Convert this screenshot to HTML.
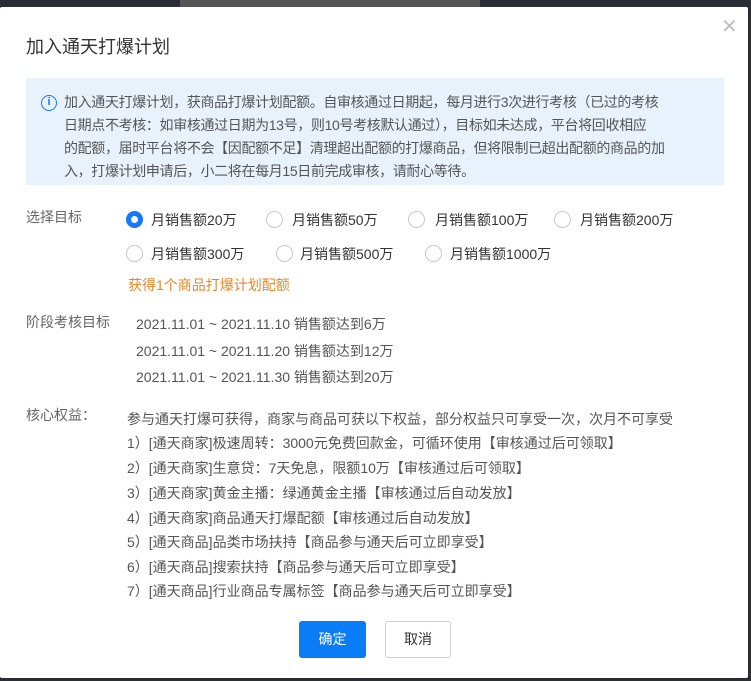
<!DOCTYPE html>
<html><head><meta charset="utf-8"><style>
*{margin:0;padding:0;box-sizing:border-box}
body{width:751px;height:681px;overflow:hidden;background:#2a2d33;font-family:"Liberation Sans","Noto Sans CJK SC",sans-serif;position:relative}
.dlg{position:absolute;left:0;top:7px;width:748px;height:671px;background:#fff;border-radius:2px}
.a{position:absolute;white-space:nowrap}
.t{font-size:14px;color:#555}
.l{font-size:14px;color:#666}
.r{position:absolute;width:17px;height:17px;border:1px solid #c8c8c8;border-radius:50%;background:#fff}
.r.on{border:5px solid #1677ff}
</style></head><body>
<div class="a" style="left:180px;top:0;width:300px;height:7px;background:#555"></div>
<div class="dlg"></div>
<div class="a" style="left:26px;top:33px;font-size:18px;color:#333">加入通天打爆计划</div>
<div class="a" style="left:721px;top:14px;font-size:20px;color:#c0c0c0;font-weight:300">✕</div>
<div class="a" style="left:26px;top:78px;width:698px;height:107px;background:#e8f2fd"></div>
<div class="a" style="left:41px;top:95px;width:16px;height:16px;border:1.5px solid #1677ff;border-radius:50%;color:#1677ff;font-size:11px;line-height:13px;text-align:center;font-weight:bold">i</div>
<div class="a t" style="left:64px;top:91px;line-height:23px;color:#555;letter-spacing:-0.35px">加入通天打爆计划，获商品打爆计划配额。自审核通过日期起，每月进行3次进行考核（已过的考核<br>日期点不考核：如审核通过日期为13号，则10号考核默认通过），目标如未达成，平台将回收相应<br>的配额，届时平台将不会【因配额不足】清理超出配额的打爆商品，但将限制已超出配额的商品的加<br>入，打爆计划申请后，小二将在每月15日前完成审核，请耐心等待。</div>

<div class="a l" style="left:26px;top:207px">选择目标</div>
<div class="r on" style="left:126px;top:211px"></div><div class="a t" style="left:151px;top:210px;color:#333">月销售额20万</div>
<div class="r" style="left:266px;top:211px"></div><div class="a t" style="left:292px;top:210px;color:#333">月销售额50万</div>
<div class="r" style="left:408px;top:211px"></div><div class="a t" style="left:435px;top:210px;color:#333">月销售额100万</div>
<div class="r" style="left:554px;top:211px"></div><div class="a t" style="left:580px;top:210px;color:#333">月销售额200万</div>
<div class="r" style="left:126px;top:245px"></div><div class="a t" style="left:151px;top:244px;color:#333">月销售额300万</div>
<div class="r" style="left:276px;top:245px"></div><div class="a t" style="left:300px;top:244px;color:#333">月销售额500万</div>
<div class="r" style="left:425px;top:245px"></div><div class="a t" style="left:450px;top:244px;color:#333">月销售额1000万</div>
<div class="a" style="left:128px;top:275px;font-size:14px;color:#e8862a">获得1个商品打爆计划配额</div>

<div class="a l" style="left:26px;top:312px">阶段考核目标</div>
<div class="a t" style="left:136px;top:314px">2021.11.01 ~ 2021.11.10 销售额达到6万</div>
<div class="a t" style="left:136px;top:341px">2021.11.01 ~ 2021.11.20 销售额达到12万</div>
<div class="a t" style="left:136px;top:367px">2021.11.01 ~ 2021.11.30 销售额达到20万</div>

<div class="a l" style="left:26px;top:405px">核心权益：</div>
<div class="a t" style="left:127px;top:409px">参与通天打爆可获得，商家与商品可获以下权益，部分权益只可享受一次，次月不可享受</div>
<div class="a t" style="left:127px;top:433px">1）[通天商家]极速周转：3000元免费回款金，可循环使用【审核通过后可领取】</div>
<div class="a t" style="left:127px;top:458px">2）[通天商家]生意贷：7天免息，限额10万【审核通过后可领取】</div>
<div class="a t" style="left:127px;top:483px">3）[通天商家]黄金主播：绿通黄金主播【审核通过后自动发放】</div>
<div class="a t" style="left:127px;top:508px">4）[通天商家]商品通天打爆配额【审核通过后自动发放】</div>
<div class="a t" style="left:127px;top:532px">5）[通天商品]品类市场扶持【商品参与通天后可立即享受】</div>
<div class="a t" style="left:127px;top:557px">6）[通天商品]搜索扶持【商品参与通天后可立即享受】</div>
<div class="a t" style="left:127px;top:581px">7）[通天商品]行业商品专属标签【商品参与通天后可立即享受】</div>

<div class="a" style="left:299px;top:621px;width:67px;height:37px;background:#0a7cf5;border-radius:3px;color:#fff;font-size:14px;line-height:37px;text-align:center">确定</div>
<div class="a" style="left:385px;top:621px;width:66px;height:37px;border:1px solid #d0d0d0;border-radius:3px;color:#333;font-size:14px;line-height:35px;text-align:center;background:#fff">取消</div>
</body></html>
